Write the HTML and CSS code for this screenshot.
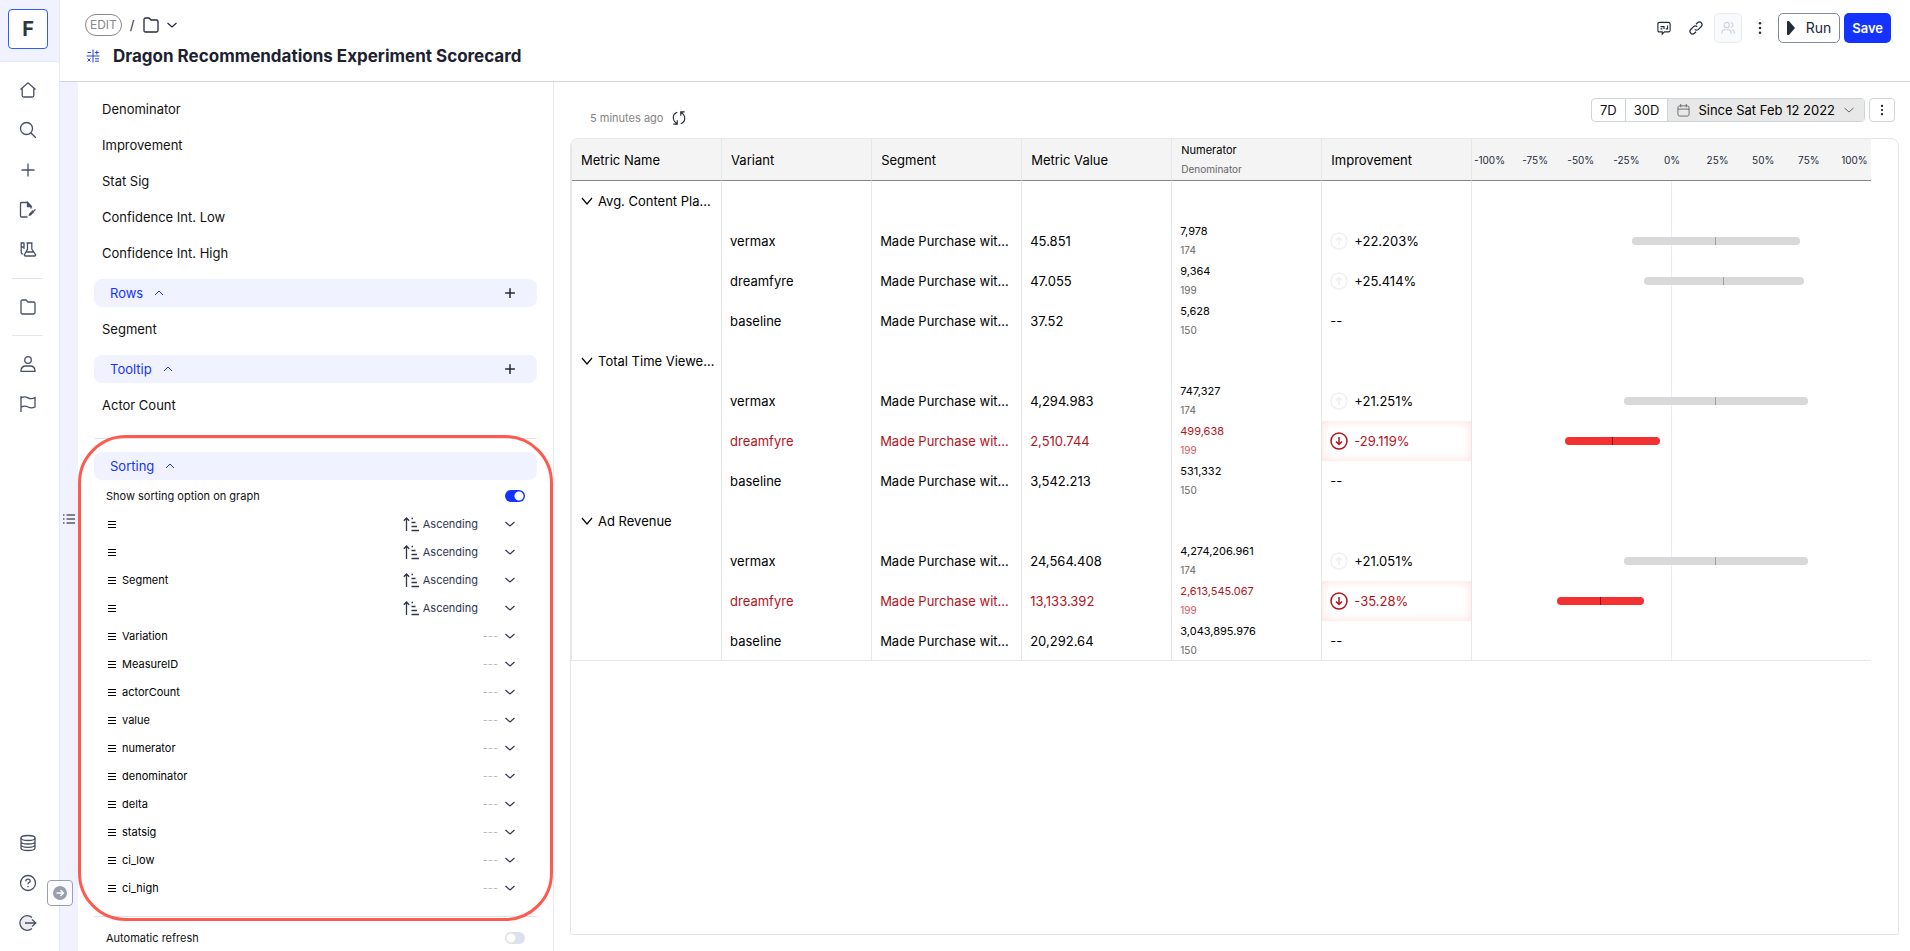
FILE: index.html
```html
<!DOCTYPE html>
<html lang="en">
<head>
    <meta charset="UTF-8">
    <meta name="viewport" content="width=device-width, initial-scale=1.0">
    <title>Dragon Recommendations Experiment Scorecard</title>
    <link rel="stylesheet" href="styles.css">
</head>
<body>
    <!-- Shared icons -->
    <svg class="defs" aria-hidden="true">
        <symbol id="down" viewBox="0 0 12 12"><path d="M1.500 4l4.500 4 4.500-4"/></symbol>
        <symbol id="up" viewBox="0 0 12 12"><path d="M2 8l4-4 4 4"/></symbol>
        <symbol id="plus" viewBox="0 0 16 16"><path d="M8 1.500v13M1.500 8h13"/></symbol>
        <symbol id="folder" viewBox="0 0 16 16"><path d="M1 2.500q0-1.500 1.500-1.500h3.500l2 2h5.500q1.500 0 1.500 1.500v9q0 1.500-1.500 1.500h-11q-1.500 0-1.500-1.500z"/></symbol>
        <symbol id="dots" viewBox="0 0 16 16"><g fill="currentColor" stroke="none"><circle cx="8" cy="2.500" r="1.400"/><circle cx="8" cy="8" r="1.400"/><circle cx="8" cy="13.500" r="1.400"/></g></symbol>
        <symbol id="asc" viewBox="0 0 16 16"><path d="M3.500 15V2M.8 4.800L3.500 2l2.700 2.800M8.500 2.500h1.500M8.500 6.500h4M8.500 10.500h5.500M8.500 14.500H16"/></symbol>
        <symbol id="arrow-up" viewBox="0 0 18 18"><circle cx="9" cy="9" r="8"/><path d="M9 13V5.500M6 8.500l3-3 3 3"/></symbol>
        <symbol id="arrow-down" viewBox="0 0 18 18"><circle cx="9" cy="9" r="8"/><path d="M9 5v7.500M6 9.500l3 3 3-3"/></symbol>
    </svg>

    <nav class="sidebar">
        <a class="logo" href="#"><span>F</span></a>
        <div class="nav-group">
            <a href="#" aria-label="Home"><svg viewBox="0 0 16 16"><path d="M.5 7.500L8 .8l7.500 6.700M2.200 6v7.500q0 1.500 1.500 1.500h8.600q1.500 0 1.500-1.500V6"/></svg></a>
            <a href="#" aria-label="Search"><svg viewBox="0 0 16 16"><circle cx="6.500" cy="6.500" r="6"/><path d="M10.800 10.800l5 5"/></svg></a>
            <a href="#" aria-label="Add"><svg><use href="#plus"/></svg></a>
            <a href="#" aria-label="Reports"><svg viewBox="0 0 16 16"><path d="M7.500 15H1.500q-1 0-1-1V1.500q0-1 1-1h6l3.500 3.500v2.500"/><path d="M7.500 .5v4H11z" fill="currentColor"/><path d="M8.500 14l.6-2.300 3.700-3.700 1.700 1.700-3.700 3.700z" fill="currentColor" stroke="none"/><path d="M14.200 7.600l1 1" stroke-width="2"/></svg></a>
            <a href="#" aria-label="Experiments"><svg viewBox="0 0 16 16"><path d="M.5 1h4M1.200 1v9.500q0 1.500 2 1.500M4 1v6M1.200 5H4M6.500 1h6M7.500 1v6L4.600 12.500q-.6 1.500 1 1.500h8.800q1.600 0 1-1.500L11.800 7V1M6.500 10h7"/></svg></a>
        </div>
        <div class="nav-group">
            <a href="#" aria-label="Files"><svg><use href="#folder"/></svg></a>
        </div>
        <div class="nav-group">
            <a href="#" aria-label="Users"><svg viewBox="0 0 16 16"><circle cx="8" cy="4" r="3.300"/><path d="M1 15.300q0-5.300 5-5.300h4q5 0 5 5.300z"/></svg></a>
            <a href="#" aria-label="Flags"><svg viewBox="0 0 16 16"><path d="M1 16V0M1 1.800q3.500-1.800 7 0t7-.3v9.500q-3.500 1.800-7 0t-7 .3"/></svg></a>
        </div>
        <div class="nav-group bottom">
            <a href="#" aria-label="Data"><svg viewBox="0 0 16 16"><ellipse cx="8" cy="3" rx="7" ry="2.500"/><path d="M1 3v10q0 2.500 7 2.500t7-2.500V3M1 6.500Q1 9 8 9t7-2.500M1 9.800q0 2.500 7 2.500t7-2.500"/></svg></a>
            <a href="#" aria-label="Help"><svg viewBox="0 0 16 16"><circle cx="8" cy="8" r="7.500"/><path d="M5.800 6.300q0-2.200 2.200-2.200t2.200 1.900q0 1.200-1.500 1.800-.7.400-.7 1.500M8 11v1.300"/></svg></a>
            <a href="#" aria-label="Log out"><svg viewBox="0 0 16 16"><path d="M12 2.500A7.300 7.300 0 1 0 12 13.500" fill="#ececf0"/><path d="M5 8h10M12 4.500L15.800 8 12 11.500"/></svg></a>
        </div>
        <button class="expand" aria-label="Expand menu"><svg viewBox="0 0 14 14"><circle cx="7" cy="7" r="7" fill="#9a9fae" stroke="none"/><path d="M3.500 7h7M7.500 4l3 3-3 3" stroke="#fff"/></svg></button>
    </nav>

    <div class="page">
        <header class="header">
            <div class="heading">
                <div class="crumbs">
                    <span class="edit">EDIT</span>
                    <span>/</span>
                    <button aria-label="Choose folder"><svg><use href="#folder"/></svg><svg class="small"><use href="#down"/></svg></button>
                </div>
                <div class="title">
                    <svg viewBox="0 0 14 14"><path d="M7 .5v13M.5 7h13M1.500 3.500H5M10.800 1.500v4M8.800 3.500h4M1.500 9.500l3 3M4.500 9.500l-3 3M9 9.800h4M9 12.200h4"/></svg>
                    <h1>Dragon Recommendations Experiment Scorecard</h1>
                </div>
            </div>
            <div class="actions">
                <button class="icon" aria-label="Comments"><svg viewBox="0 0 16 16"><path d="M3 1.500h10q2 0 2 2v7q0 2-2 2H8.500L6 15v-2.500H3q-2 0-2-2v-7q0-2 2-2zM4 6.500h4v2.500M4 9h2M10 9h2V5"/></svg></button>
                <button class="icon" aria-label="Copy link"><svg viewBox="0 0 16 16"><path d="M6.500 9.500a3 3 0 0 0 4.300 0l3.200-3.200a3 3 0 0 0-4.300-4.300L8 3.700M9.500 6.500a3 3 0 0 0-4.300 0L2 9.700a3 3 0 0 0 4.300 4.300L8 12.300"/></svg></button>
                <button class="icon share" aria-label="Share" disabled><svg viewBox="0 0 16 16"><circle cx="6.500" cy="4.500" r="3"/><path d="M1 14.500v-1.500q0-3 3-3h4.500q3 0 3 3v1.500M11 1.700q2.500.6 2.500 2.800T11 7.400M12.800 10q2.500.6 2.500 3v1.500"/></svg></button>
                <button class="icon" aria-label="More"><svg><use href="#dots"/></svg></button>
                <button class="run"><svg viewBox="0 0 8 14"><path d="M0 1q0-1 1-1h1l6 7-6 7H1q-1 0-1-1z" fill="currentColor" stroke="none"/></svg>Run</button>
                <button class="save">Save</button>
            </div>
        </header>

        <div class="content">
            <div class="strip"><svg viewBox="0 0 12 12"><path d="M0 2h1.500M0 6h1.500M0 10h1.500M3.500 2H12M3.500 6H12M3.500 10H12"/></svg></div>

            <aside class="config">
                <ul class="fields">
                    <li>Denominator</li>
                    <li>Improvement</li>
                    <li>Stat Sig</li>
                    <li>Confidence Int. Low</li>
                    <li>Confidence Int. High</li>
                </ul>
                <div class="section"><button>Rows<svg class="small"><use href="#up"/></svg></button><button aria-label="Add row"><svg class="add"><use href="#plus"/></svg></button></div>
                <ul class="fields single"><li>Segment</li></ul>
                <div class="section"><button>Tooltip<svg class="small"><use href="#up"/></svg></button><button aria-label="Add tooltip"><svg class="add"><use href="#plus"/></svg></button></div>
                <ul class="fields single"><li>Actor Count</li></ul>

                <div class="sorting">
                    <div class="section"><button>Sorting<svg class="small"><use href="#up"/></svg></button></div>
                    <label class="option">Show sorting option on graph<input type="checkbox" class="switch" checked></label>
                    <ul class="sort-list" id="sortList"></ul>
                </div>
                <label class="option refresh">Automatic refresh<input type="checkbox" class="switch"></label>
                <div class="highlight"></div>
            </aside>

            <main class="main">
                <div class="toolbar">
                    <div class="updated">5 minutes ago <button aria-label="Refresh"><svg viewBox="0 0 16 16"><path d="M6 1.500Q1 3.500 1.500 8T6 14.500M1.500 15H6v-4.500M10 14.500q5-2 4.500-6.500T10 1.500M14.500 1H10v4.500"/></svg></button></div>
                    <div class="range">
                        <div class="range-group">
                            <button>7D</button>
                            <button>30D</button>
                            <button class="selected"><svg viewBox="0 0 14 14"><rect x="1" y="2" width="12" height="11" rx="2"/><path d="M1 5.500h12M4 0v3.500M10 0v3.500"/></svg>Since Sat Feb 12 2022<svg class="small"><use href="#down"/></svg></button>
                        </div>
                        <button class="more" aria-label="Chart options"><svg><use href="#dots"/></svg></button>
                    </div>
                </div>

                <div class="card">
                    <table class="scorecard">
                        <thead>
                            <tr>
                                <th>Metric Name</th>
                                <th>Variant</th>
                                <th>Segment</th>
                                <th>Metric Value</th>
                                <th class="pair"><span>Numerator</span><small>Denominator</small></th>
                                <th>Improvement</th>
                                <th class="axis"><div><span>-100%</span><span>-75%</span><span>-50%</span><span>-25%</span><span>0%</span><span>25%</span><span>50%</span><span>75%</span><span>100%</span></div></th>
                            </tr>
                        </thead>
                        <tbody id="scoreBody"></tbody>
                    </table>
                </div>
            </main>
        </div>
    </div>
    <script src="script.js"></script>
</body>
</html>
```
FILE: styles.css
```css
* {
    box-sizing: border-box;
}

body {
    display: flex;
    height: 100vh;
    margin: 0;
    overflow: hidden;
    background: #fff;
    color: #111;
    font-family: Inter, sans-serif;
    font-size: 13px;
    line-height: 20px;
}

button {
    display: flex;
    align-items: center;
    padding: 0;
    border: none;
    background: none;
    color: inherit;
    font: inherit;
    cursor: pointer;
}

ul {
    margin: 0;
    padding: 0;
    list-style: none;
}

svg {
    flex: none;
    width: 16px;
    height: 16px;
    fill: none;
    stroke: currentColor;
    stroke-width: 1.3;
    overflow: visible;
}

.defs {
    display: none;
}

.small {
    width: 12px;
    height: 12px;
}

/* Left navigation */
.sidebar {
    position: relative;
    display: flex;
    flex-direction: column;
    flex: none;
    width: 60px;
    border-right: 1px solid #e6e8f4;
    color: #474f66;
}

.logo {
    display: flex;
    height: 62px;
    padding: 9px 11px 9px 8px;
    border-bottom: 1px solid #e6e8f4;
    background: #f0f2ff;
    color: #2d3446;
    font-size: 20px;
    font-weight: 700;
    text-decoration: none;
}

.logo span {
    display: flex;
    align-items: center;
    justify-content: center;
    width: 40px;
    height: 40px;
    border: 1px solid #2f5bff;
    border-radius: 4px;
    background: #fff;
}

.nav-group {
    display: flex;
    flex-direction: column;
    width: 56px;
    padding: 8px 0;
}

.nav-group + .nav-group {
    padding-top: 0;
}

.nav-group + .nav-group:not(.bottom)::before {
    content: "";
    height: 1px;
    margin: 0 13px 8px 12px;
    background: #e3e6ee;
}

.nav-group a {
    display: flex;
    align-items: center;
    justify-content: center;
    height: 40px;
    color: inherit;
}

.bottom {
    margin-top: auto;
}

.expand {
    position: absolute;
    left: 47px;
    bottom: 45px;
    z-index: 2;
    justify-content: center;
    width: 26px;
    height: 26px;
    border: 1px solid #9a9fae;
    border-radius: 4px;
    background: rgba(255, 255, 255, 0.7);
}

.expand svg {
    width: 14px;
    height: 14px;
}

.page {
    display: flex;
    flex: 1;
    flex-direction: column;
    min-width: 0;
}

/* Header */
.header {
    display: flex;
    align-items: flex-start;
    justify-content: space-between;
    flex: none;
    height: 82px;
    padding: 13px 19px 0 25px;
    border-bottom: 1px solid #cfd6da;
    color: #232a3b;
}

.crumbs,
.crumbs button {
    display: flex;
    align-items: center;
    gap: 8px;
}

.crumbs {
    margin-top: 1px;
}

.crumbs button {
    gap: 7px;
}

.edit {
    padding: 0 4px;
    border: 1px solid #888;
    border-radius: 11px;
    color: #888;
    font-size: 12px;
}

.title {
    display: flex;
    align-items: center;
    gap: 13px;
    margin-top: 7px;
    padding-left: 1px;
}

.title svg {
    width: 14px;
    height: 14px;
    color: #2b43d9;
    stroke-width: 1;
}

h1 {
    margin: 0;
    color: #1d2130;
    font-size: 17px;
    font-weight: 700;
    line-height: 26px;
}

.actions {
    display: flex;
    align-items: center;
    gap: 4px;
}

.icon {
    justify-content: center;
    width: 28px;
    height: 30px;
}

.icon svg {
    width: 14px;
    height: 14px;
}

.share {
    border: 1px solid #e6e8f2;
    border-radius: 5px;
    background: #f9fafc;
    color: #ced2df;
}

.run,
.save {
    height: 30px;
    padding: 0 8px;
    border-radius: 5px;
    font-size: 14px;
}

.run {
    gap: 11px;
    border: 1px solid #8289a0;
}

.run svg {
    width: 8px;
    height: 14px;
}

.save {
    background: #1433ff;
    color: #fff;
    font-size: 13px;
    font-weight: 600;
}

.content {
    display: flex;
    flex: 1;
    min-height: 0;
}

.strip {
    display: flex;
    align-items: center;
    justify-content: center;
    flex: none;
    width: 18px;
    padding-top: 5px;
    background: #f0f2ff;
}

.strip svg {
    width: 12px;
    height: 12px;
    stroke-width: 1;
}

/* Configuration panel */
.config {
    position: relative;
    flex: none;
    width: 476px;
    padding: 9px 16px;
    border-right: 1px solid #e6e8f4;
}

.fields {
    padding-bottom: 8px;
}

.fields li {
    height: 36px;
    padding: 8px;
}

.single {
    padding-top: 4px;
}

.section {
    display: flex;
    align-items: center;
    justify-content: space-between;
    height: 28px;
    padding: 0 21px 0 16px;
    border-radius: 8px;
    background: #f0f2ff;
}

.section button:first-child {
    gap: 10px;
    color: #1433ff;
}

.section .small {
    stroke-width: 1;
}

.add {
    width: 12px;
    height: 12px;
    color: #232a3b;
    stroke-width: 2;
}

.sorting {
    margin-top: 7px;
    padding: 13px 0 14px;
    border-top: 1px solid #e3e4e8;
    border-bottom: 1px solid #e3e4e8;
}

.option {
    display: flex;
    align-items: center;
    justify-content: space-between;
    height: 30px;
    padding: 2px 12px 0;
    font-size: 11px;
}

.refresh {
    height: 40px;
}

.switch {
    appearance: none;
    width: 20px;
    height: 12px;
    margin: 0;
    border-radius: 6px;
    background: radial-gradient(circle at 6px 6px, #fff 4px, #dcdfee 5px);
}

.switch:checked {
    background: radial-gradient(circle at 14px 6px, #fff 4px, #1433ff 5px);
}

.sort-list li {
    display: flex;
    align-items: center;
    height: 28px;
    padding: 0 21px 0 14px;
    color: #000;
    font-size: 11px;
}

.grip {
    width: 8px;
    height: 8px;
    margin-right: 6px;
    stroke-width: 1;
}

.order {
    gap: 6px;
    margin-left: auto;
    color: #bbb;
}

.order.asc {
    gap: 26px;
    color: #30374c;
}

.order span {
    display: flex;
    align-items: center;
    gap: 4px;
}

.order .small {
    color: #30374c;
    stroke-width: 1.2;
}

.highlight {
    position: absolute;
    top: 353px;
    right: 0;
    left: 0;
    height: 486px;
    border: 3px solid #ff5a4f;
    border-radius: 48px;
    pointer-events: none;
}

/* Scorecard */
.main {
    display: flex;
    flex: 1;
    flex-direction: column;
    min-width: 0;
    padding: 16px 11px 16px 16px;
}

.toolbar,
.updated,
.range,
.range-group {
    display: flex;
}

.toolbar {
    justify-content: space-between;
    height: 40px;
}

.updated {
    align-items: center;
    gap: 9px;
    padding-left: 20px;
    color: #858585;
    font-size: 11px;
}

.updated button {
    color: #232a3b;
}

.updated svg {
    width: 14px;
    height: 14px;
}

.range {
    gap: 4px;
    padding-right: 4px;
}

.range-group,
.more {
    height: 24px;
    border: 1px solid #cfd6da;
    border-radius: 4px;
}

.range-group button {
    padding: 0 8px;
}

.range-group button + button {
    border-left: 1px solid #cfd6da;
}

.range-group .selected {
    gap: 8px;
    padding: 0 9px;
    background: #e8e8e8;
    color: #000;
}

.selected svg {
    color: #666;
    stroke-width: 1;
}

.selected svg:first-child {
    width: 13px;
    height: 13px;
}

.more {
    justify-content: center;
    width: 26px;
}

.more svg {
    width: 12px;
    height: 12px;
}

.card {
    flex: 1;
    overflow: hidden;
    border: 1px solid #e6e7e9;
    border-radius: 8px 8px 2px 2px;
}

.scorecard {
    width: 98%;
    border-collapse: separate;
    border-spacing: 0;
    border-left: 1px solid #e6e7e9;
    table-layout: fixed;
    color: #000;
}

th,
td {
    height: 40px;
    padding: 0 8px;
    border-right: 1px solid #e6e7e9;
    font-weight: 400;
    text-align: left;
    white-space: nowrap;
}

tr:last-child td {
    border-bottom: 1px solid #e6e7e9;
}

th {
    height: 42px;
    padding: 0 9px;
    border-bottom: 1px solid #858585;
    background: #f4f4f4;
}

.scorecard .axis {
    width: 399px;
    padding: 0;
    border-right: none;
    font-size: 10px;
}

.axis div {
    display: flex;
    justify-content: space-between;
    color: #232a3b;
}

.axis span {
    width: 34px;
    text-align: center;
}

.pair span,
.pair small {
    display: block;
    font-size: 11px;
    line-height: 19px;
}

.pair small {
    color: #666;
    font-size: 10px;
}

.group {
    display: flex;
    align-items: center;
    gap: 4px;
}

.group svg {
    width: 14px;
    height: 14px;
    stroke-width: 1.2;
}

.bad {
    color: #b5121b;
}

.bad small {
    color: #d0565d;
}

.bad .change {
    box-shadow: inset 0 0 10px #ffdcdc;
}

.change div {
    display: flex;
    align-items: center;
    gap: 6px;
}

.change svg {
    width: 18px;
    height: 18px;
    stroke-width: 1.5;
}

.good .change svg {
    color: #edf0f0;
}

/* Confidence interval plot */
.scorecard .plot {
    padding: 0;
    border-right: none;
    background: linear-gradient(#e9eafa, #e9eafa) center / 1px 100% no-repeat;
}

.interval {
    height: 8px;
    border-radius: 4px;
    background: linear-gradient(#a0a0a0, #a0a0a0) center / 1px 100% no-repeat #d9d9d9;
}

.bad .interval {
    background: linear-gradient(#8a1015, #8a1015) center / 1px 100% no-repeat #f53030;
}
```
FILE: script.js
```js
const sortFields = [
    ['', true], ['', true], ['Segment', true], ['', true],
    ['Variation'], ['MeasureID'], ['actorCount'], ['value'], ['numerator'],
    ['denominator'], ['delta'], ['statsig'], ['ci_low'], ['ci_high']
];

// interval: [left, width] as a percentage of the plot column
const metrics = [
    { name: 'Avg. Content Pla...', rows: [
        ['vermax', '45.851', '7,978', '174', '+22.203%', [40, 42]],
        ['dreamfyre', '47.055', '9,364', '199', '+25.414%', [43, 40]],
        ['baseline', '37.52', '5,628', '150', '--']
    ] },
    { name: 'Total Time Viewe...', rows: [
        ['vermax', '4,294.983', '747,327', '174', '+21.251%', [38, 46]],
        ['dreamfyre', '2,510.744', '499,638', '199', '-29.119%', [23.25, 23.75]],
        ['baseline', '3,542.213', '531,332', '150', '--']
    ] },
    { name: 'Ad Revenue', rows: [
        ['vermax', '24,564.408', '4,274,206.961', '174', '+21.051%', [38, 46]],
        ['dreamfyre', '13,133.392', '2,613,545.067', '199', '-35.28%', [21.25, 21.75]],
        ['baseline', '20,292.64', '3,043,895.976', '150', '--']
    ] }
];

document.getElementById('sortList').innerHTML = sortFields.map(([name, asc]) => `
    <li>
        <svg class="grip" viewBox="0 0 8 8"><path d="M0 1.500h8M0 4.500h8M0 7.500h8"/></svg>
        ${name}
        <button class="order ${asc ? 'asc' : ''}" aria-label="Sort order">
            <span>${asc ? '<svg><use href="#asc"/></svg>Ascending' : '---'}</span>
            <svg class="small"><use href="#down"/></svg>
        </button>
    </li>`).join('');

function renderRow([variant, value, num, den, change, interval]) {
    const state = !interval ? '' : change.startsWith('-') ? 'bad' : 'good';
    const icon = !interval ? '' : `<svg><use href="#arrow-${state === 'bad' ? 'down' : 'up'}"/></svg>`;
    const bar = interval ? `<div class="interval" style="margin-left: ${interval[0]}%; width: ${interval[1]}%"></div>` : '';
    return `
        <tr class="${state}">
            <td></td>
            <td>${variant}</td>
            <td>Made Purchase wit...</td>
            <td>${value}</td>
            <td class="pair"><span>${num}</span><small>${den}</small></td>
            <td class="change"><div>${icon}${change}</div></td>
            <td class="plot">${bar}</td>
        </tr>`;
}

document.getElementById('scoreBody').innerHTML = metrics.map(metric => `
    <tr>
        <td><button class="group"><svg viewBox="0 0 14 14"><path d="M2 4l5 6 5-6"/></svg>${metric.name}</button></td>
        <td></td><td></td><td></td><td></td><td></td>
        <td class="plot"></td>
    </tr>
    ${metric.rows.map(renderRow).join('')}`).join('');
```
